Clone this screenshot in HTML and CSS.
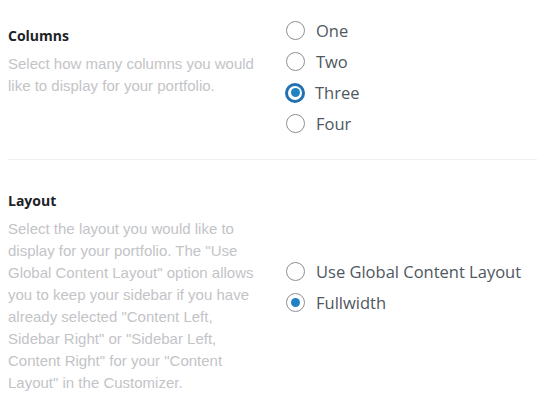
FILE: index.html
```html
<!DOCTYPE html>
<html lang="en">
<head>
    <meta charset="UTF-8">
    <title>Portfolio Settings</title>
    <link rel="stylesheet" href="styles.css">
</head>
<body>
    <div class="settings">
        <div class="setting-row">
            <div class="setting-info">
                <h3 class="setting-title">Columns</h3>
                <p class="setting-desc">Select how many columns you would like to display for your portfolio.</p>
            </div>
            <div class="setting-options">
                <label class="option"><input type="radio" name="columns" value="1"> One</label>
                <label class="option"><input type="radio" name="columns" value="2"> Two</label>
                <label class="option"><input type="radio" name="columns" value="3" class="focused" checked> Three</label>
                <label class="option"><input type="radio" name="columns" value="4"> Four</label>
            </div>
        </div>
        <div class="setting-row">
            <div class="setting-info">
                <h3 class="setting-title">Layout</h3>
                <p class="setting-desc">Select the layout you would like to display for your portfolio. The "Use Global Content Layout" option allows you to keep your sidebar if you have already selected "Content Left, Sidebar Right" or "Sidebar Left, Content Right" for your "Content Layout" in the Customizer.</p>
            </div>
            <div class="setting-options">
                <label class="option"><input type="radio" name="layout" value="global"> Use Global Content Layout</label>
                <label class="option"><input type="radio" name="layout" value="full" checked> Fullwidth</label>
            </div>
        </div>
    </div>
</body>
</html>
```

FILE: styles.css
```css
body {
    margin: 0;
    background-color: #fff;
    font-family: "Open Sans", "Noto Sans", sans-serif;
    overflow: hidden;
}
.settings {
    margin-left: 8px;
}
.setting-row {
    display: grid;
    grid-template-columns: 255px 1fr;
    column-gap: 23px;
    padding: 20px 0;
    border-top: 1px solid #f0f0f1;
}
.setting-row:first-child {
    padding-top: 15px;
    border-top: none;
}
.setting-info {
    align-self: start;
    padding-top: 10px;
}
.setting-title {
    margin: 0 0 6px;
    font-size: 14px;
    line-height: 22px;
    font-weight: 700;
    color: #1d2327;
}
.setting-desc {
    margin: 0;
    font-family: "Liberation Sans", Arial, sans-serif;
    font-size: 15px;
    line-height: 22px;
    color: #c3c4c7;
}
.setting-options {
    align-self: center;
    display: flex;
    flex-direction: column;
}
.option {
    display: flex;
    align-items: center;
    gap: 11px;
    height: 31px;
    font-size: 16.5px;
    color: #50575e;
    cursor: pointer;
}
.option input {
    appearance: none;
    -webkit-appearance: none;
    margin: 0;
    width: 19px;
    height: 19px;
    border: 1px solid #8c8f94;
    border-radius: 50%;
    background: #fff;
    display: flex;
    align-items: center;
    justify-content: center;
    flex-shrink: 0;
}
.option input:checked::before {
    content: "";
    width: 9px;
    height: 9px;
    border-radius: 50%;
    background-color: #2182c3;
}
.option input.focused {
    border: 2px solid #2271b1;
    box-shadow: 0 0 0 1px #2271b1;
    width: 18px;
    height: 18px;
}
```
